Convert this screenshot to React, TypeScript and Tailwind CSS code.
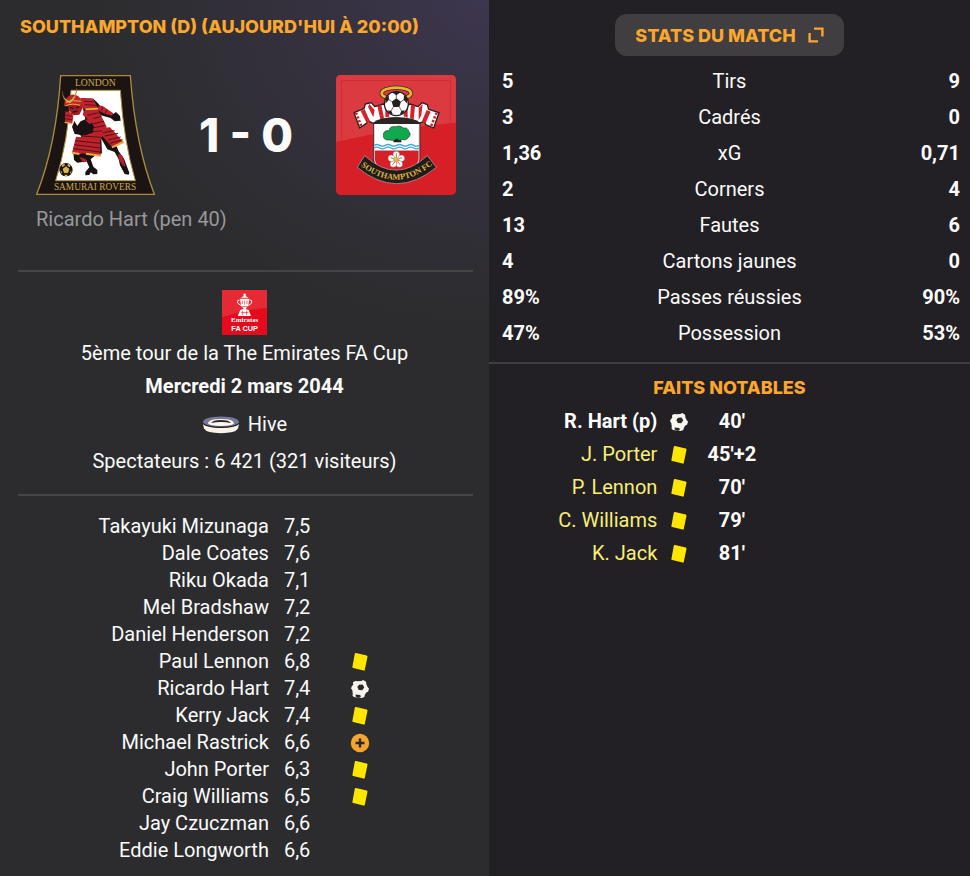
import React from 'react';

type IconKind = 'card' | 'goal' | 'sub';

interface Stat {
  label: string;
  home: string;
  away: string;
}

interface Player {
  name: string;
  rating: string;
  icon?: IconKind;
}

interface MatchEvent {
  name: string;
  icon: IconKind;
  time: string;
}

const stats: Stat[] = [
  { label: 'Tirs', home: '5', away: '9' },
  { label: 'Cadrés', home: '3', away: '0' },
  { label: 'xG', home: '1,36', away: '0,71' },
  { label: 'Corners', home: '2', away: '4' },
  { label: 'Fautes', home: '13', away: '6' },
  { label: 'Cartons jaunes', home: '4', away: '0' },
  { label: 'Passes réussies', home: '89%', away: '90%' },
  { label: 'Possession', home: '47%', away: '53%' },
];

const players: Player[] = [
  { name: 'Takayuki Mizunaga', rating: '7,5' },
  { name: 'Dale Coates', rating: '7,6' },
  { name: 'Riku Okada', rating: '7,1' },
  { name: 'Mel Bradshaw', rating: '7,2' },
  { name: 'Daniel Henderson', rating: '7,2' },
  { name: 'Paul Lennon', rating: '6,8', icon: 'card' },
  { name: 'Ricardo Hart', rating: '7,4', icon: 'goal' },
  { name: 'Kerry Jack', rating: '7,4', icon: 'card' },
  { name: 'Michael Rastrick', rating: '6,6', icon: 'sub' },
  { name: 'John Porter', rating: '6,3', icon: 'card' },
  { name: 'Craig Williams', rating: '6,5', icon: 'card' },
  { name: 'Jay Czuczman', rating: '6,6' },
  { name: 'Eddie Longworth', rating: '6,6' },
];

const events: MatchEvent[] = [
  { name: 'R. Hart (p)', icon: 'goal', time: "40'" },
  { name: 'J. Porter', icon: 'card', time: "45'+2" },
  { name: 'P. Lennon', icon: 'card', time: "70'" },
  { name: 'C. Williams', icon: 'card', time: "79'" },
  { name: 'K. Jack', icon: 'card', time: "81'" },
];

const EventIcon: React.FC<{ kind: IconKind }> = ({ kind }) => {
  if (kind === 'card') {
    return (
      <svg viewBox="0 0 20 20" className="inline-block h-5 w-5 align-middle" role="img" aria-label="Carton jaune">
        <path d="M6 1 16.700 3.600a1 1 0 0 1 .8 1.200L14.800 17.800a1 1 0 0 1-1.200.8L3.200 16.100a1 1 0 0 1-.8-1.200L4.800 1.800A1 1 0 0 1 6 1z" fill="#ffe600" />
      </svg>
    );
  }
  if (kind === 'goal') {
    return (
      <svg viewBox="0 0 20 20" className="inline-block h-5 w-5 align-middle" role="img" aria-label="But">
        <path d="M3 3.200 5.200 2l2.600.3 3.400-.2L13.200 1l2.900 1.700.3 2.900 1.200 2.500 1.400 1.300-.8 3.200-2.100 1.200-1.300 2.300-.5 1.900-2.600 1-2.400-.2-3.500-.6-1.900-.1L2.500 16.600l.3-2.200-.6-3.600L1 9.400l.9-2.500 1.300-.9z" fill="#f8f5ef" />
        <path d="M9 5.800l3.600-.3 1.700 2.900-2.100 2.900-3.400-.4-1.500-2.800z" fill="#29282b" />
        <path d="M5.600 15.400l4.700.5.5 2.200-2.300.9-2.900-1.500z" fill="#29282b" />
      </svg>
    );
  }
  return (
    <svg viewBox="0 0 20 20" className="inline-block h-5 w-5 align-middle" role="img" aria-label="Remplaçant entré">
      <circle cx="10" cy="10" r="9.200" fill="#f5a42c" />
      <path d="M10 5.500v9M5.500 10h9" stroke="#262529" strokeWidth="2.400" />
    </svg>
  );
};

const SamuraiCrest = () => (
  <svg viewBox="18 21 360 360" className="h-[120px] w-[120px] shrink-0" role="img" aria-label="London Samurai Rovers">
    <path d="M92 23H301Q316 230 373 379H20Q79 230 92 23z" fill="#1c1412" stroke="#a98a3c" strokeWidth="4" />
    <path d="M123 67H271Q281 220 316 338H77Q115 220 123 67z" fill="#fff" stroke="#b3923f" strokeWidth="3" />
    <g transform="translate(78 60)">
      {/* black undersuit, gloves and feet */}
      <path d="M74 30l38 2 14 14 10 12 36 20 8-6 12 12 2 14-18 2-12-10-30-8-16 10 20 38 34 14 6 22 10 24 16 22 16 42-2 6-12-2-14-26-4-18-12-22-22-8-18-32 2 44-22 8-12 10 8 22 12 10v12l-12 1-8-6-4 8-12 1v-10l12-14-10-22-10 6-16 2-10-8-2-24 10-14 14-34-12-8 2-26 8-10 14-6z" fill="#181213" />
      {/* shins */}
      <path d="M70 207l18 5 6 9-14 2zM186 196l14 8 8 32-8-4-12-18z" fill="#b51f2a" />
      {/* right sleeve */}
      <path d="M128 52l12 2 32 22-4 7-20-5-24-12z" fill="#c1242d" />
      <path d="M140 58l-5 11M153 65l-5 11" stroke="#4d1216" strokeWidth="3" />
      {/* chest */}
      <path d="M84 68l40-6 20 38 8 16-12 26-8 16-56-4 4-16 26-8 4-30-16-8-14-12z" fill="#bd222c" />
      <path d="M94 82l34-8M104 94l32-9M108 108l36-8M108 120l38-7M100 132l42-4M78 144l56 4" stroke="#4d1216" strokeWidth="3" />
      {/* bent left arm */}
      <path d="M56 98q4 16 18 18l28-10 12 8-4 20-22 8-32-4-8-22z" fill="#181213" />
      <path d="M88 96l22-8 6 14-16 6z" fill="#bd222c" />
      {/* shoulder plate */}
      <path d="M74 30l38 2 14 30-36 2-20-8z" fill="#c1242d" />
      <path d="M84 40l30 2M86 50l34 2" stroke="#58151a" strokeWidth="3" />
      <path d="M88 64l38-2" stroke="#e4b03c" strokeWidth="5" />
      {/* hip plates */}
      <path d="M60 146l72 6 2 52-42-6-14-2-8 4-22-6z" fill="#bd222c" />
      <path d="M58 158l74 8M55 170l78 10M52 182l80 10" stroke="#4d1216" strokeWidth="3" />
      <path d="M48 194l22 4M90 197l44 6" stroke="#e4b03c" strokeWidth="6" />
      <path d="M138 120l24-2 40 44-34 15-30-34z" fill="#bd222c" />
      <path d="M140 134l36-6M146 144l40-8M156 156l38-9M162 166l38-11" stroke="#4d1216" strokeWidth="3" />
      <path d="M168 178l35-16" stroke="#e4b03c" strokeWidth="6" />
      {/* neck guard, face and helmet */}
      <path d="M28 70l20 4 4 12-3 20-22-3z" fill="#c1242d" />
      <path d="M29 82l20 3M28 92l20 3" stroke="#58151a" strokeWidth="3" />
      <path d="M26 103l23 4" stroke="#e4b03c" strokeWidth="4" />
      <path d="M36 46l38-4 6 18-10 20-18 2-14-16z" fill="#a31c25" />
      <path d="M42 58l10 4M60 60l10-4M50 72l14-2" stroke="#181213" strokeWidth="4" />
      <path d="M24 54q0-26 22-34 24-2 32 22l-2 14-20-6-24 4z" fill="#c1242d" />
      <path d="M30 44q20-10 46-4M28 54q20-10 44-2" stroke="#e4b03c" strokeWidth="3" fill="none" />
      <path d="M19 10q2 24 20 28 18-6 24-38-2 36-22 46-22-6-22-36z" fill="#e0b349" stroke="#7b5a1b" />
    </g>
    {/* ball */}
    <circle cx="108" cy="305" r="20" fill="#191314" />
    <path d="M108 295l10 8-4 12h-12l-4-12zM95 291l8-4 2 5-8 6zM114 287l8 5-3 6-7-5zM91 308l5 3-1 8zM125 308l-5 4 1 7zM103 320h11l-3 4h-6z" fill="#d8b44c" />
    <text x="196" y="54" textAnchor="middle" fontSize="29" fill="#cda94b" className="font-[Liberation_Serif,serif]">LONDON</text>
    <text x="195" y="366" textAnchor="middle" fontSize="28" fill="#cda94b" className="font-[Liberation_Serif,serif]">SAMURAI ROVERS</text>
  </svg>
);

const SouthamptonCrest = () => (
  <svg viewBox="18 21 360 360" className="h-[120px] w-[120px] shrink-0" role="img" aria-label="Southampton FC">
    <rect x="18" y="21" width="360" height="360" rx="14" fill="#d71f28" />
    <path d="M32 21H364a14 14 0 0 1 14 14V164Q210 176 18 222V35a14 14 0 0 1 14-14z" fill="#dc3a41" />
    <rect x="35" y="38" width="326" height="326" fill="none" stroke="#c52a31" strokeWidth="2" />
    {/* halo */}
    <ellipse cx="199" cy="76" rx="44" ry="17" fill="none" stroke="#3a2b22" strokeWidth="13" />
    <ellipse cx="199" cy="76" rx="44" ry="17" fill="none" stroke="#edb52f" strokeWidth="8" />
    {/* scarf */}
    <path
      d="M72 134l30-12 4-14 18-4 10 12 26-8q40 30 80 0l24 8 12-12 16 6 4 14 31 10-16 46-24-10-4-10-28 10q-30-20-58-20-34 0-60 20l-24-12-4 8-20 14z"
      fill="#fff"
      stroke="#262022"
      strokeWidth="4"
      strokeLinejoin="round"
    />
    <path d="M104 124l16 36-10 6-18-37zM118 108l16 18-4 22-16-32zM142 114l12-4 8 40-10 8zM166 114l10 6 2 26-12 2zM221 120l12-5 0 34-12-4zM243 110l12 4-4 42-11-7zM266 120l12-12-4 34-8 14zM290 126l12 5-16 36-11-6z" fill="#d5232c" />
    <path d="M78 134l16 41M320 134l-17 41" stroke="#d5232c" strokeWidth="8" strokeDasharray="7 5" />
    {/* shield */}
    <path d="M129 164q20-16 70-16t72 16v112q-10 36-72 58-62-22-70-58z" fill="#2b2526" />
    <path d="M133 168h134v80H133z" fill="#fff" />
    <path d="M133 248h134v28q-10 34-67 52-60-18-67-52z" fill="#d71f28" />
    <path d="M133 168V276q7 34 67 52 60-18 67-52V168" fill="none" stroke="#ded6d3" strokeWidth="3" />
    <path d="M133 232q8-5 16 0t17 0 17 0 17 0 17 0 17 0 17 0 16 0M133 240q8-5 16 0t17 0 17 0 17 0 17 0 17 0 17 0 16 0" fill="none" stroke="#45a8dd" strokeWidth="4" />
    {/* tree */}
    <path d="M194 202l-4 21h25l-6-21z" fill="#251d1c" />
    <path d="M178 216q-18 2-18-14 0-16 18-14 0-14 18-12 14-6 24 4 14-2 16 10 10 10-2 20-8 10-18 4-8 6-16-2-8 8-22 4z" fill="#12a84d" stroke="#184b28" strokeWidth="2" />
    {/* rose */}
    <g fill="#fffdf8" stroke="#8f272b" strokeWidth="1">
      <circle cx="199" cy="260" r="10" />
      <circle cx="214" cy="271" r="10" />
      <circle cx="208" cy="288" r="10" />
      <circle cx="190" cy="288" r="10" />
      <circle cx="184" cy="271" r="10" />
    </g>
    <circle cx="199" cy="275" r="7" fill="#e8b93a" />
    <path d="M199 268v-12M206 273l10-4M203 281l7 9M195 281l-7 9M192 273l-10-4" stroke="#4b3a31" strokeWidth="2" />
    {/* ball */}
    <circle cx="199" cy="107" r="36" fill="#fff" stroke="#262022" strokeWidth="4" />
    <path d="M199 91l14 10-5 16h-18l-5-16zM186 73q13-5 26 0l-13 9zM167 90l9-8 1 13-11 12zM231 90l-9-8-1 13 11 12zM173 127l11 2 5 11-10-3zM225 127l-11 2-5 11 10-3z" fill="#262022" />
    <path d="M199 91v-10M213 101l9-6M208 117l7 12M190 117l-7 12M185 101l-8-6" stroke="#262022" strokeWidth="2" />
    {/* ribbon */}
    <path d="M104 263L82 298Q200 396 319 298L292 263Q198 350 104 263z" fill="#211c1c" stroke="#b9a9a5" strokeWidth="2" />
    <path id="ribbon-line" d="M93 294Q199 378 308 290" fill="none" />
    <text fontSize="25" fontWeight="700" fill="#dcb53f" className="font-[Liberation_Serif,serif]">
      <textPath href="#ribbon-line" startOffset="50%" textAnchor="middle">SOUTHAMPTON FC</textPath>
    </text>
  </svg>
);

const CupLogo = () => (
  <svg viewBox="129 30 135 135" className="h-[45px] w-[45px]" role="img" aria-label="Emirates FA Cup">
    <rect x="129" y="30" width="135" height="135" fill="#e30b1c" />
    <path d="M129 30H264V84Q200 88 129 112z" fill="#e52a36" />
    <g fill="#fff">
      <path d="M193 41h8l-1 7 8 5H186l8-5zM183 56h28l-3 20q-2 7-7 8v5h-8v-5q-6-2-7-8zM184 90l9-3h6l10 3 7 18H176z" />
      <path d="M182 60q-9-1-6 9l10 8M212 60q9-1 6 9l-10 8" fill="none" stroke="#fff" strokeWidth="3" />
    </g>
    <path d="M190 62v10M197 62v12M204 62v10M186 98h22M191 92v14M203 92v14M188 80h18" stroke="#e3202d" strokeWidth="2" />
    <text x="197" y="126" textAnchor="middle" fontSize="21" fontWeight="700" fill="#fff" className="font-[Liberation_Serif,serif]">Emirates</text>
    <text x="197" y="154" textAnchor="middle" fontSize="22" fontWeight="700" fill="#fff" className="font-[Liberation_Sans,sans-serif]">FA CUP</text>
  </svg>
);

const StadiumIcon = () => (
  <svg viewBox="70 405 116 60" className="h-5 w-[38px]" aria-hidden="true">
    <path d="M73 432q2-6 55-6t55 6l-3 14q-8 14-52 14t-52-14z" fill="#f8f3e4" />
    <path d="M73 428q0-18 55-19 55 1 55 19-5 14-55 14t-55-14z" fill="#77779a" />
    <path d="M73 430q10 12 55 12t55-12" fill="none" stroke="#1c1b24" strokeWidth="4" />
    <path d="M88 430q2-13 40-13t40 13q-6 8-40 8t-40-8z" fill="#fff8e6" />
    <path d="M98 429q4-9 30-9t30 9q-30-7-60 0z" fill="#2c2932" />
  </svg>
);

const PopOutIcon = () => (
  <svg viewBox="0 0 16 16" className="h-4 w-4" fill="none" stroke="currentColor" strokeWidth="2.400" aria-hidden="true">
    <path d="M6 1.600h8.400V9.500M1.600 6v8.400H10" />
  </svg>
);

const MatchSummary = () => (
  <section className="bg-[#2c2c2e] bg-[radial-gradient(ellipse_400px_330px_at_top_right,#3d364f_0%,#35313e_45%,#2c2c2e_100%)] bg-no-repeat pt-3">
    <h1 className="pl-5 font-[Inter,sans-serif] text-[18px] leading-[30px] font-extrabold text-[#fba62d] uppercase">
      Southampton (D) (Aujourd'hui à 20:00)
    </h1>
    <div className="mt-[33px] flex items-center justify-between pr-[33px] pl-9">
      <SamuraiCrest />
      <p className="font-[Inter,sans-serif] text-[46px] leading-none font-extrabold">1 - 0</p>
      <SouthamptonCrest />
    </div>
    <p className="mt-[10px] pl-9 text-[#98989a]">Ricardo Hart (pen 40)</p>

    <hr className="mt-9 mr-4 ml-[18px] border-t-2 border-[#454547]" />

    <div className="flex flex-col items-center pt-[18px] text-center">
      <CupLogo />
      <p className="mt-1">5ème tour de la The Emirates FA Cup</p>
      <p className="mt-1 font-bold">Mercredi 2 mars 2044</p>
      <p className="mt-[9px] flex items-center gap-2">
        <StadiumIcon />
        Hive
      </p>
      <p className="mt-2">Spectateurs : 6 421 (321 visiteurs)</p>
    </div>

    <hr className="mt-[18px] mr-4 ml-[18px] border-t-2 border-[#454547]" />

    <table className="mt-[17px] w-full table-fixed">
      <tbody>
        {players.map((player) => (
          <tr key={player.name} className="h-[27px] leading-[27px]">
            <th scope="row" className="w-[55%] p-0 text-right font-normal">{player.name}</th>
            <td className="w-[14%] p-0 pl-[15px]">{player.rating}</td>
            <td className="p-0 pl-[13px] leading-none">{player.icon && <EventIcon kind={player.icon} />}</td>
          </tr>
        ))}
      </tbody>
    </table>
  </section>
);

const MatchStats = () => (
  <section className="bg-[#222024] pt-[14px]">
    <div className="flex justify-center">
      <button className="flex h-[42px] items-center gap-3 rounded-xl bg-[#403e41] px-5 font-[Inter,sans-serif] text-[18px] font-extrabold text-[#fba62d] uppercase">
        Stats du match
        <PopOutIcon />
      </button>
    </div>
    <table className="mt-[7px] w-full table-fixed">
      <tbody>
        {stats.map((stat) => (
          <tr key={stat.label} className="h-9">
            <td className="w-1/4 p-0 pl-[13px] font-bold">{stat.home}</td>
            <th scope="row" className="p-0 text-center font-normal">{stat.label}</th>
            <td className="w-1/4 p-0 pr-[10px] text-right font-bold">{stat.away}</td>
          </tr>
        ))}
      </tbody>
    </table>

    <hr className="mt-[11px] border-t-2 border-[#403e42]" />

    <h2 className="mt-[9px] text-center font-[Inter,sans-serif] text-[18px] leading-[30px] font-extrabold text-[#fba62d] uppercase">
      Faits notables
    </h2>
    <table className="mt-[2px] w-full table-fixed">
      <tbody>
        {events.map((event) => (
          <tr key={event.name} className="h-[33px]">
            <th
              scope="row"
              className={`w-[35%] p-0 text-right ${event.icon === 'goal' ? 'font-bold text-white' : 'font-normal text-[#f9ee76]'}`}
            >
              {event.name}
            </th>
            <td className="w-[9%] p-0 text-center leading-none"><EventIcon kind={event.icon} /></td>
            <td className="w-[13%] p-0 text-center font-bold">{event.time}</td>
            <td></td>
          </tr>
        ))}
      </tbody>
    </table>
  </section>
);

const App: React.FC = () => {
  return (
    <main className="grid min-h-screen grid-cols-[489fr_481fr] bg-[#222024] font-[Roboto,sans-serif] text-[20px] leading-[29px] text-[#fbfbfb]">
      <MatchSummary />
      <MatchStats />
    </main>
  );
};

export default App;
